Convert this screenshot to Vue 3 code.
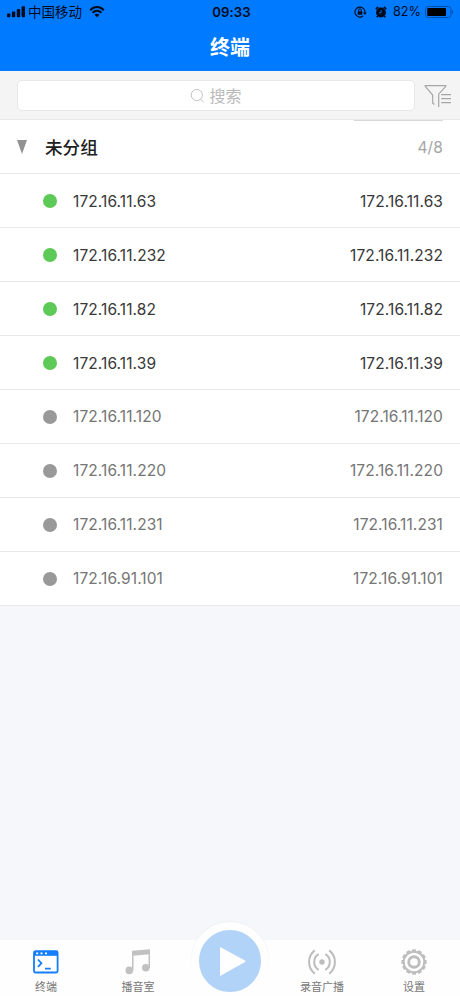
<script setup>
const terminals = [
  { ip: '172.16.11.63', online: true },
  { ip: '172.16.11.232', online: true },
  { ip: '172.16.11.82', online: true },
  { ip: '172.16.11.39', online: true },
  { ip: '172.16.11.120', online: false },
  { ip: '172.16.11.220', online: false },
  { ip: '172.16.11.231', online: false },
  { ip: '172.16.91.101', online: false },
]
const teeth = Array.from({ length: 12 }, (_, i) => i * 30)
</script>

<template>
  <div class="screen">
    <header class="top">
      <div class="status">
        <div class="carrier">
          <svg class="signal" width="19" height="12" viewBox="0 0 19 12">
            <rect x="0" y="7.4" width="3.4" height="3.8" rx="1" />
            <rect x="4.9" y="5.4" width="3.4" height="5.8" rx="1" />
            <rect x="9.8" y="3" width="3.4" height="8.2" rx="1" />
            <rect x="14.6" y="0.3" width="3.4" height="10.9" rx="1" />
          </svg>
          <span class="network">中国移动</span>
          <svg class="wifi" width="16" height="12" viewBox="0 0 16 12">
            <path d="M1.2 4.2C5-.1 11-.1 14.8 4.2M3.6 6.8c2.6-2.6 6.2-2.6 8.8 0" fill="none" stroke="#000b1c" stroke-width="2.1" />
            <path d="M5.5 8.7c1.5-1.3 3.5-1.3 5 0L8 11.2z" />
          </svg>
        </div>
        <span class="time">09:33</span>
        <div class="indicators">
          <svg class="lock" width="13" height="12" viewBox="0 0 13 12">
            <path d="M9.1 10A5 5 0 1 1 10.9 6.9" fill="none" stroke="#000b1c" stroke-width="1.1" />
            <path d="M9 6.5h3.8L10.9 9z" />
            <rect x="3.7" y="5.3" width="4.6" height="3.5" rx=".4" />
            <path d="M4.6 5.5V4.2a1.4 1.4 0 0 1 2.8 0v1.3" fill="none" stroke="#000b1c" />
          </svg>
          <svg class="alarm" width="12" height="12" viewBox="0 0 12 12">
            <circle cx="6" cy="6.5" r="4.9" />
            <path d="M.8 3.1 3.1.9M11.2 3.1 8.9.9M2.8 10 1.8 11.3M9.2 10l1 1.3" stroke="#000b1c" stroke-width="1.6" />
            <path d="M6.1 4v2.8H4" fill="none" stroke="#007aff" stroke-width=".8" />
          </svg>
          <span class="percent">82%</span>
          <svg class="battery" width="29" height="12" viewBox="0 0 29 12">
            <rect x=".5" y=".5" width="25.5" height="11" rx="2.8" fill="none" stroke="#0050a9" />
            <rect x="2.2" y="2" width="18.8" height="8" rx="1" fill="#000" />
            <path d="M27 4v4c1.5-.7 1.5-3.3 0-4" fill="#0050a9" />
          </svg>
        </div>
      </div>
      <h1>终端</h1>
    </header>

    <section class="search-bar">
      <div class="search">
        <svg width="15" height="16" viewBox="0 0 15 16" fill="none" stroke="#c4c4c4">
          <circle cx="6.8" cy="7" r="5.6" />
          <path d="m10.7 11.1 3.1 3.4" />
        </svg>
        <span>搜索</span>
      </div>
      <svg class="filter" width="28" height="24" viewBox="0 0 28 24" fill="none" stroke="#a6a6a6" stroke-width="1.2">
        <path d="M8.7 19.6V11L1.2 2.3V1.6h20.6v.7L14.7 10.2V23M8.4 18.8l2 1.7M17.2 10.6H27M17.2 14.6H27M17.2 18.6H27" />
      </svg>
    </section>

    <main>
      <div class="group">
        <span class="overscroll"></span>
        <svg class="arrow" width="10" height="14" viewBox="0 0 10 14"><path d="M0 0h10L5 14z" fill="#929292" /></svg>
        <h2>未分组</h2>
        <span class="count">4/8</span>
      </div>
      <div v-for="terminal in terminals" :key="terminal.ip" class="row" :class="{ offline: !terminal.online }">
        <i class="dot"></i>
        <span>{{ terminal.ip }}</span>
        <span class="address">{{ terminal.ip }}</span>
      </div>
    </main>

    <nav>
      <a class="tab">
        <svg width="26" height="24" viewBox="0 0 26 24">
          <rect x="1" y="1.2" width="23.6" height="21.3" rx="1.5" fill="#fff" stroke="#147efb" stroke-width="1.8" />
          <path d="M1 1.2h23.6v4.6H1z" fill="#147efb" />
          <path d="M3.2 3.4h2M7.5 3.4h2M12 3.4h2" stroke="#fff" stroke-width="1.9" />
          <path d="m5 9.5 3.4 3.7L5 17M12 18.6h5.8" fill="none" stroke="#147efb" stroke-width="1.8" />
        </svg>
        <span>终端</span>
      </a>
      <a class="tab">
        <svg width="26" height="26" viewBox="0 0 26 26">
          <path d="M7.1 1.8 25 .2v5L7.1 6.8z" fill="#c1c1c1" />
          <path d="M7.8 3v18M24.3 2v17" stroke="#c1c1c1" stroke-width="1.5" />
          <circle cx="4.3" cy="21.4" r="3.8" fill="#c1c1c1" />
          <circle cx="20.8" cy="18.7" r="3.8" fill="#c1c1c1" />
        </svg>
        <span>播音室</span>
      </a>
      <a class="play">
        <span class="disc"><svg width="26" height="29" viewBox="0 0 26 29"><path d="M0 1Q0 0 1 .5L25 13.5q1 .8 0 1.5L1 28.5q-1 .5-1-.5z" fill="#fff" /></svg></span>
      </a>
      <a class="tab">
        <svg width="28" height="26" viewBox="0 0 28 26" fill="none" stroke="#bdbdbd" stroke-width="2">
          <circle cx="14" cy="13" r="2.7" fill="#bdbdbd" stroke="none" />
          <path d="M10.7 5.2a9 9 0 0 0 0 15.6M17.3 5.2a9 9 0 0 1 0 15.6M6.8 1.4a14.6 14.6 0 0 0 0 23.2M21.2 1.4a14.6 14.6 0 0 1 0 23.2" />
        </svg>
        <span>录音广播</span>
      </a>
      <a class="tab">
        <svg width="26" height="26" viewBox="0 0 26 26" fill="none" stroke="#bdbdbd">
          <circle cx="13" cy="13" r="10.3" stroke-width="1.9" />
          <circle cx="13" cy="13" r="5.3" stroke-width="2.9" />
          <path v-for="angle in teeth" :key="angle" d="M11 1.8h4" stroke-width="2.8" :transform="`rotate(${angle} 13 13)`" />
        </svg>
        <span>设置</span>
      </a>
    </nav>
  </div>
</template>

<style>
body { margin: 0; }
</style>

<style scoped>
* { box-sizing: border-box; }
.screen { width: 460px; height: 996px; display: flex; flex-direction: column; overflow: hidden; background: #f5f7fa; font-family: Inter, "Noto Sans CJK SC", sans-serif; }
svg { display: block; flex: none; }
.top { flex: none; height: 71px; background: #007aff; color: #fff; }
.status { height: 24px; display: grid; grid-template-columns: 1fr auto 1fr; align-items: center; padding: 0 6px 0 7px; color: #000b1c; fill: #000b1c; font-size: 13.5px; line-height: 24px; }
.carrier, .indicators { display: flex; align-items: center; height: 24px; }
.network { margin-left: 2px; }
.wifi { margin-left: 7px; }
.time { font-size: 13.2px; font-weight: 600; letter-spacing: .1px; padding-left: 2px; }
.indicators { justify-content: flex-end; }
.alarm { margin-left: 8px; }
.percent { margin: 0 4px 0 6px; font-size: 12.7px; }
h1 { margin: 0; padding-top: 4px; text-align: center; font-size: 20px; line-height: 40px; font-weight: 600; }
.search-bar { flex: none; height: 49px; display: flex; align-items: center; padding: 1px 8px 0 17px; background: #f4f4f4; border-bottom: 1px solid #e9e9e9; }
.search { width: 398px; height: 31px; display: flex; align-items: center; justify-content: center; gap: 4px; background: #fff; border: 1px solid #e8e8e8; border-radius: 5px; color: #bababa; font-size: 16px; line-height: 24px; }
.filter { margin-left: 9px; }
main { flex: none; background: #fff; }
.group { position: relative; height: 54px; display: flex; align-items: center; padding: 1px 17px 0; border-bottom: 1px solid #e8e8e8; }
.overscroll { position: absolute; top: 0; right: 17px; width: 89px; height: 1px; background: #d8d8d8; }
.arrow { width: 10px; }
h2 { margin: 0 0 0 18px; padding-top: 2px; font-size: 17.6px; line-height: 26px; font-weight: 500; color: #202020; }
.count { margin-left: auto; padding-top: 1px; color: #a5a5a5; font-size: 15.5px; letter-spacing: .1px; }
.row { height: 54px; display: flex; align-items: center; padding: 0 17px 0 43px; border-bottom: 1px solid #e8e8e8; color: #383838; font-size: 15.5px; letter-spacing: .09px; }
.row span { padding-top: 1px; }
.row.offline span { padding-top: 0; }
.dot { width: 14px; height: 14px; margin-right: 16px; border-radius: 50%; background: #5dc956; }
.address { margin-left: auto; }
.offline { color: #757575; }
.offline .dot { background: #999; }
nav { margin-top: auto; height: 56px; display: grid; grid-template-columns: repeat(5, 1fr); background: #fefefe; }
.tab { display: flex; flex-direction: column; align-items: center; justify-content: space-between; height: 56px; padding-top: 9px; color: #777; font-size: 11px; line-height: 18px; }
.tab:first-child { padding-top: 10px; }
.play { display: flex; justify-content: center; margin-top: -18px; }
.disc { width: 78px; height: 78px; display: flex; align-items: center; justify-content: center; padding-left: 6px; border: 8px solid #fefefe; border-radius: 50%; background: #b2d3f8; box-shadow: 0 -1px 1px #edf0f3; }
</style>
